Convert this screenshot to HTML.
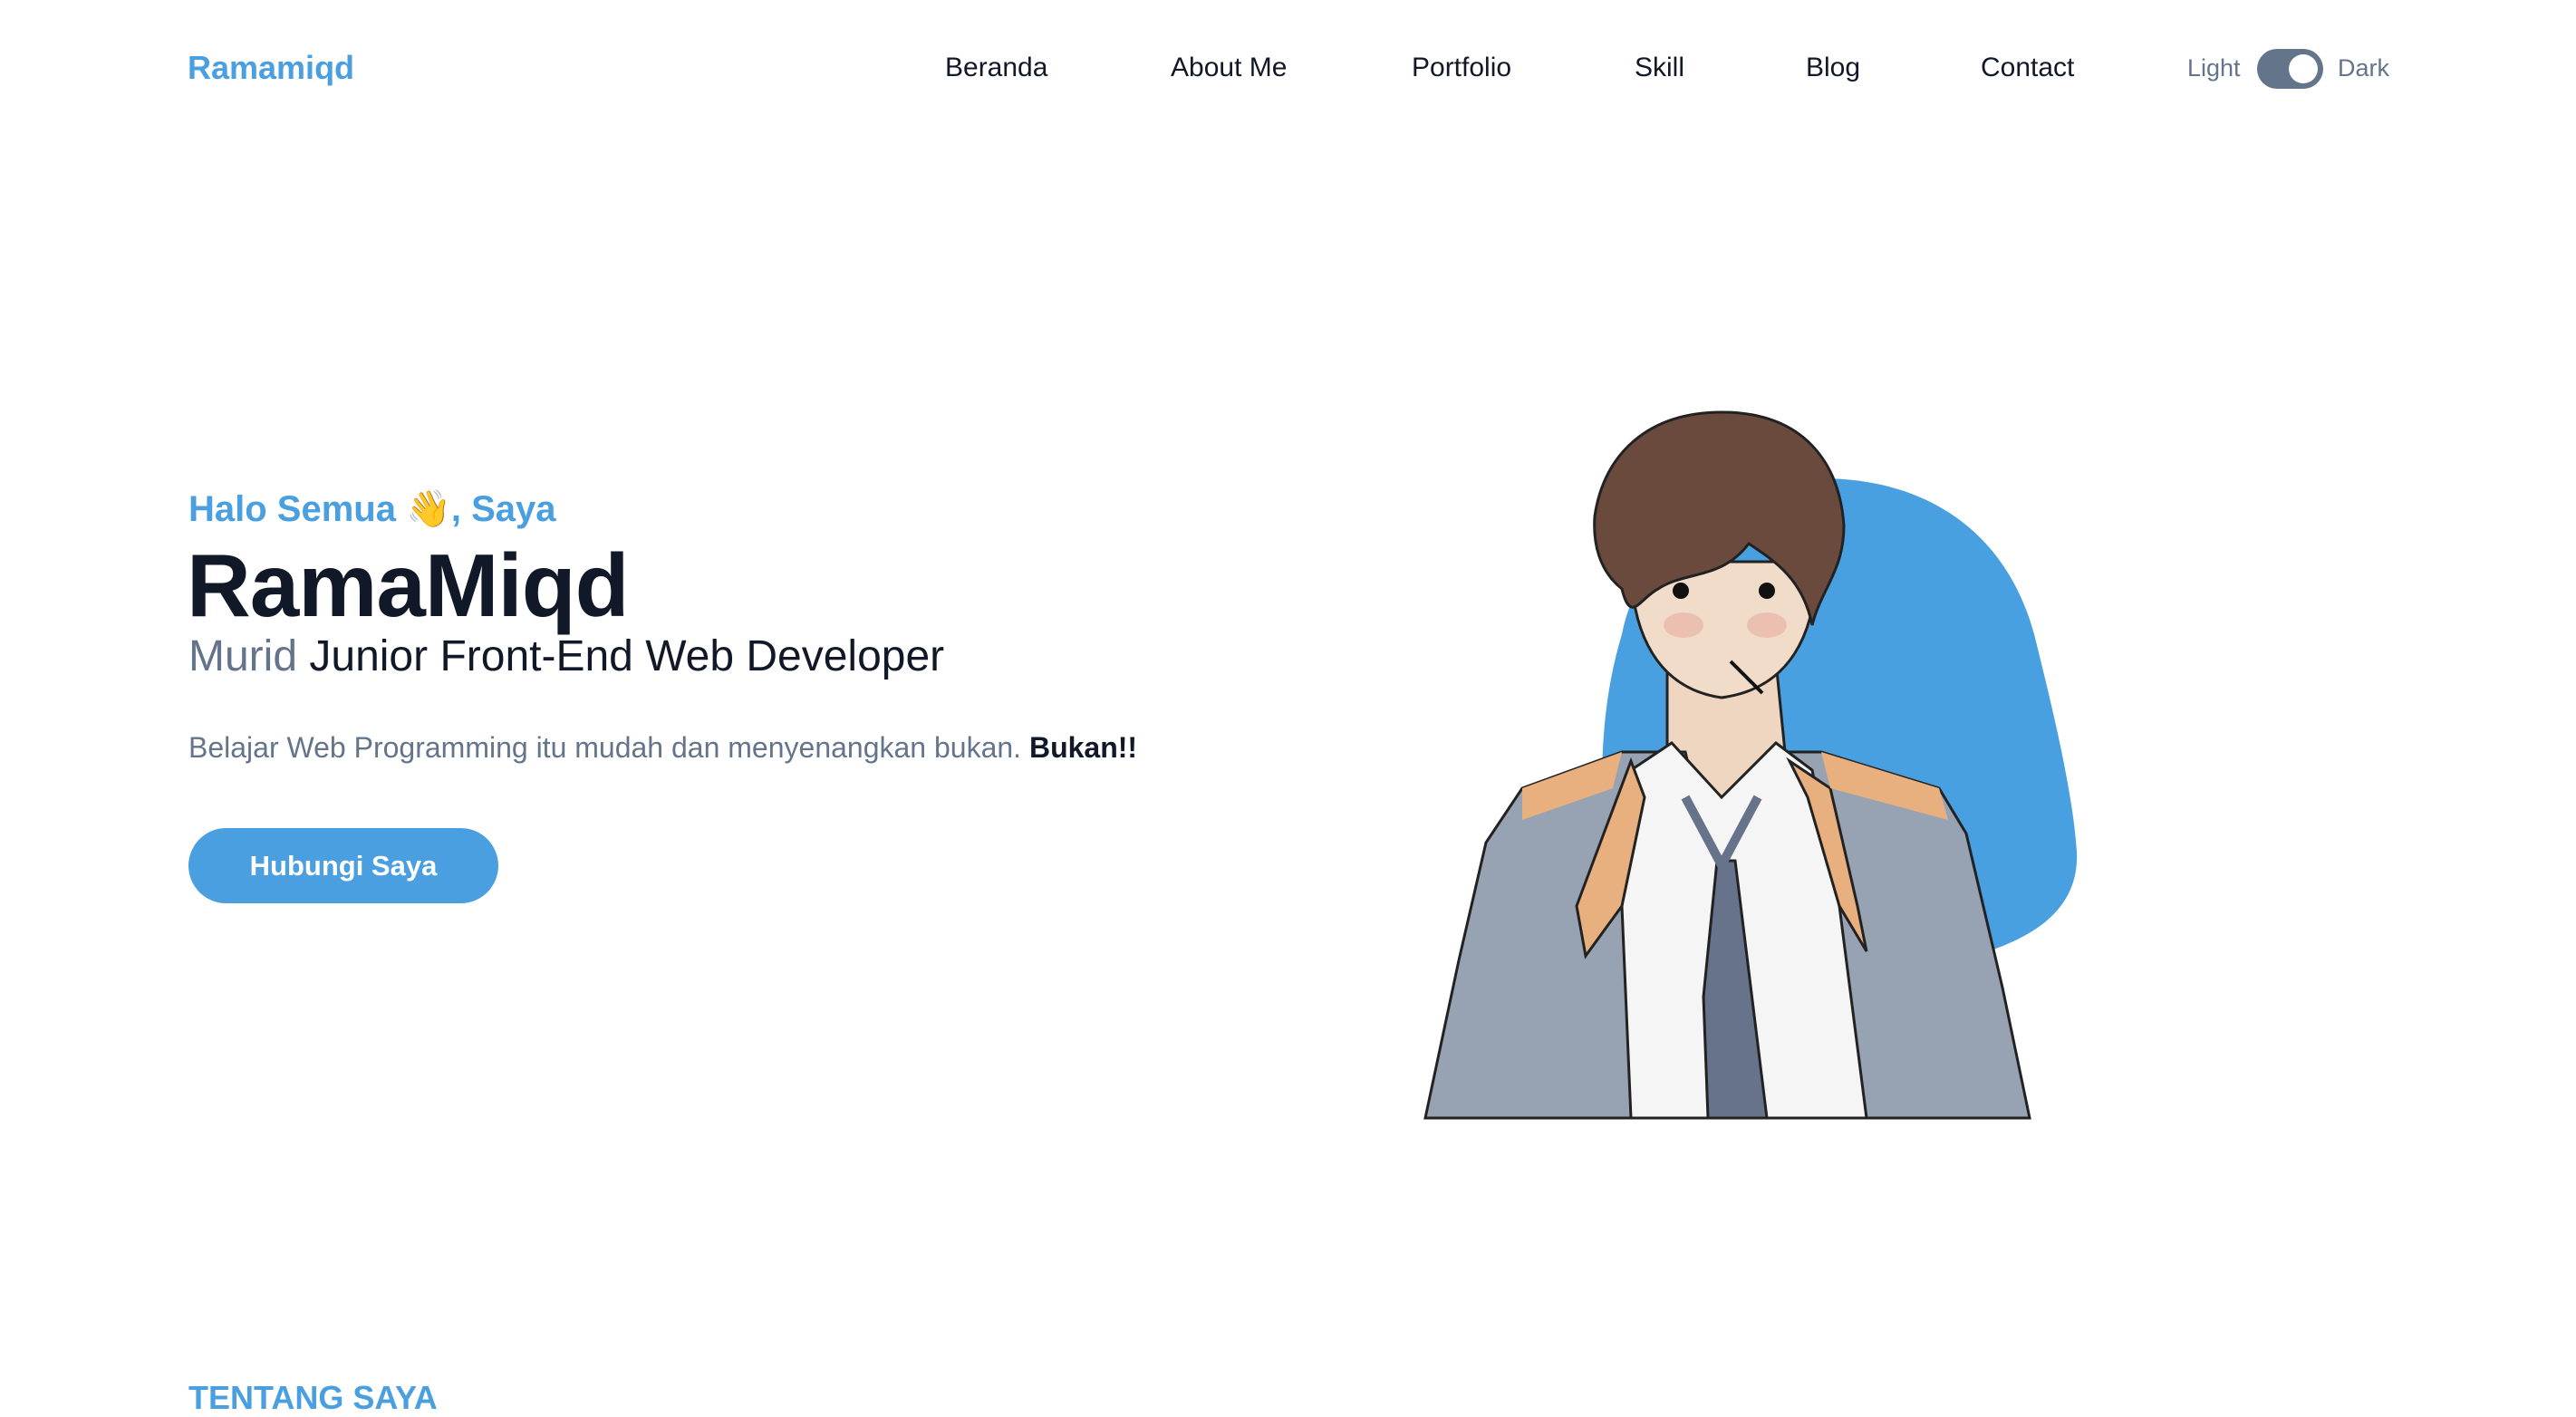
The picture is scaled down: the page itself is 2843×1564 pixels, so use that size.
<!DOCTYPE html>
<html><head><meta charset="utf-8"><style>
*{margin:0;padding:0;box-sizing:border-box}
body{width:2843px;height:1553px;overflow:hidden;background:#fff;font-family:"Liberation Sans",sans-serif;position:relative}
.a{position:absolute;white-space:nowrap}
.nav{font-size:30px;color:#111827;top:58px}
</style></head><body>
<div class="a" style="left:207px;top:54px;font-size:36px;font-weight:bold;color:#4a9fe0">Ramamiqd</div>
<div class="a nav" style="left:1043px">Beranda</div>
<div class="a nav" style="left:1292px">About Me</div>
<div class="a nav" style="left:1558px">Portfolio</div>
<div class="a nav" style="left:1804px">Skill</div>
<div class="a nav" style="left:1993px">Blog</div>
<div class="a nav" style="left:2186px">Contact</div>
<div class="a" style="left:2414px;top:60px;font-size:27px;color:#64748b">Light</div>
<div class="a" style="left:2491px;top:54px;width:73px;height:44px;border-radius:22px;background:#64748b"><div style="position:absolute;right:6px;top:6px;width:32px;height:32px;border-radius:50%;background:#fff"></div></div>
<div class="a" style="left:2580px;top:60px;font-size:27px;color:#64748b">Dark</div>

<div class="a" style="left:208px;top:538px;font-size:40px;font-weight:bold;color:#4a9fe0">Halo Semua 👋, Saya</div>
<div class="a" style="left:206px;top:590px;font-size:98px;font-weight:bold;color:#111827;letter-spacing:-1px">RamaMiqd</div>
<div class="a" style="left:208px;top:697px;font-size:48px;color:#111827"><span style="color:#64748b">Murid</span> Junior Front-End Web Developer</div>
<div class="a" style="left:208px;top:807px;font-size:32px;color:#64748b">Belajar Web Programming itu mudah dan menyenangkan bukan. <b style="color:#111827">Bukan!!</b></div>
<div class="a" style="left:208px;top:914px;width:342px;height:83px;border-radius:42px;background:#4a9fe0;color:#fff;font-size:31px;font-weight:bold;text-align:center;line-height:83px">Hubungi Saya</div>
<div class="a" style="left:208px;top:1522px;font-size:36px;font-weight:bold;color:#4a9fe0">TENTANG SAYA</div>

<svg class="a" style="left:1500px;top:420px" width="850" height="840" viewBox="1500 420 850 840">
<path d="M1790,700 C1810,600 1900,528 2010,528 C2130,528 2215,590 2245,700 C2270,800 2288,880 2292,940 C2295,1000 2250,1030 2200,1048 L1780,1048 C1765,900 1760,800 1790,700 Z" fill="#48a0e1"/>
<path d="M1840,730 L1840,830 L1900,880 L1970,830 L1960,730 Z" fill="#eed6c0" stroke="#222" stroke-width="3"/>
<path d="M1573,1234 L1610,1060 L1640,930 L1680,870 L1790,830 L1860,830 L1900,1000 L1950,830 L2010,830 L2140,870 L2170,920 L2210,1090 L2240,1234 Z" fill="#97a3b2" stroke="#222" stroke-width="3"/>
<path d="M1800,850 L1845,820 L1900,880 L1960,820 L2000,850 L2030,1000 L2060,1234 L1800,1234 L1790,1000 Z" fill="#f5f5f5" stroke="#222" stroke-width="3"/>
<path d="M1800,840 L1740,1000 L1750,1055 L1790,1000 L1815,880 Z" fill="#e9b07f" stroke="#222" stroke-width="3"/>
<path d="M1975,840 L2020,870 L2050,1000 L2060,1050 L2030,1000 L1995,880 Z" fill="#e9b07f" stroke="#222" stroke-width="3"/>
<path d="M1680,870 L1790,830 L1780,870 L1680,905 Z" fill="#e9b07f"/>
<path d="M2010,830 L2140,870 L2150,905 L2020,870 Z" fill="#e9b07f"/>
<path d="M1895,950 L1915,950 L1950,1234 L1885,1234 L1880,1100 Z" fill="#66738a" stroke="#222" stroke-width="3"/>
<path d="M1860,880 L1900,955 L1940,880" fill="none" stroke="#66738a" stroke-width="10"/>
<path d="M1800,620 C1800,700 1830,760 1900,770 C1975,760 2005,700 2005,620 Z" fill="#f0dcc8" stroke="#222" stroke-width="3"/>
<ellipse cx="1858" cy="690" rx="22" ry="14" fill="#eab3a5" opacity=".7"/>
<ellipse cx="1950" cy="690" rx="22" ry="14" fill="#eab3a5" opacity=".7"/>
<circle cx="1855" cy="652" r="9" fill="#111"/><circle cx="1950" cy="652" r="9" fill="#111"/>
<line x1="1910" y1="730" x2="1945" y2="765" stroke="#111" stroke-width="4"/>
<path d="M1760,570 C1770,500 1820,455 1900,455 C1990,455 2030,510 2035,580 C2035,630 2010,650 2000,690 C1990,640 1960,620 1930,600 C1900,640 1860,630 1830,650 C1810,660 1800,690 1790,650 C1765,630 1758,600 1760,570 Z" fill="#6b4a3e" stroke="#222" stroke-width="3"/>
</svg>
</body></html>
